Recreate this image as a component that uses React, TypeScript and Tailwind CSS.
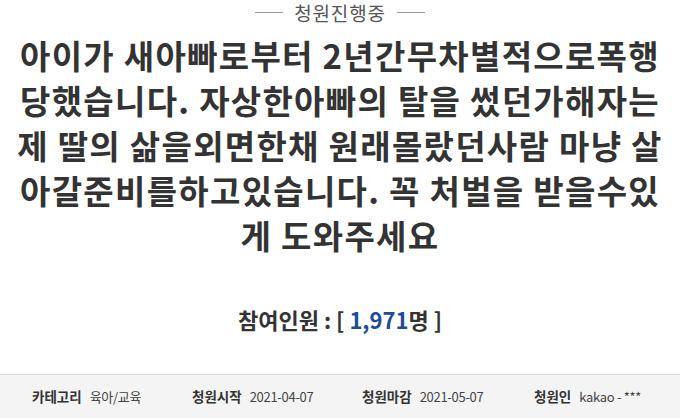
const FONT = '"Noto Sans CJK KR", "Noto Sans", sans-serif'

const titleLines = [
  '아이가 새아빠로부터 2년간무차별적으로폭행',
  '당했습니다. 자상한아빠의 탈을 썼던가해자는',
  '제 딸의 삶을외면한채 원래몰랐던사람 마냥 살',
  '아갈준비를하고있습니다. 꼭 처벌을 받을수있',
  '게 도와주세요',
]

const meta = [
  { label: '카테고리', value: '육아/교육', w: 'w-[160px]' },
  { label: '청원시작', value: '2021-04-07', w: 'w-[170px]' },
  { label: '청원마감', value: '2021-05-07', w: 'w-[172px]' },
  { label: '청원인', value: 'kakao - ***', w: '' },
]

export default function App() {
  return (
    <div className="flex h-[418px] w-[680px] flex-col overflow-hidden bg-white" style={{ fontFamily: FONT }}>
      <div className="flex h-[25px] items-center justify-center gap-[11px]">
        <span className="h-px w-[28px] bg-[#9a9a9a]" />
        <span className="text-[19px] leading-none tracking-[0.8px] text-[#555]">청원진행중</span>
        <span className="h-px w-[28px] bg-[#9a9a9a]" />
      </div>

      <h1 className="mt-[8px] text-center text-[33px] font-bold leading-[45px] tracking-[1.3px] whitespace-nowrap text-[#333]">
        {titleLines.map((line) => (
          <div key={line}>{line}</div>
        ))}
      </h1>

      <div className="mt-[50px] text-center text-[22px] font-bold leading-none text-[#333]">
        참여인원 : [ <span className="text-[#1b4c99]">1,971</span>명 ]
      </div>

      <div className="mt-auto flex h-[44px] items-center border-t border-[#dcdcdc] bg-[#f4f4f4] pl-[32px] text-[13px] text-[#444]">
        {meta.map((m) => (
          <div key={m.label} className={`flex items-baseline gap-[8px] ${m.w}`}>
            <span className="text-[13.5px] font-bold text-[#333]">{m.label}</span>
            <span className="tracking-[-0.3px]">{m.value}</span>
          </div>
        ))}
      </div>
    </div>
  )
}
